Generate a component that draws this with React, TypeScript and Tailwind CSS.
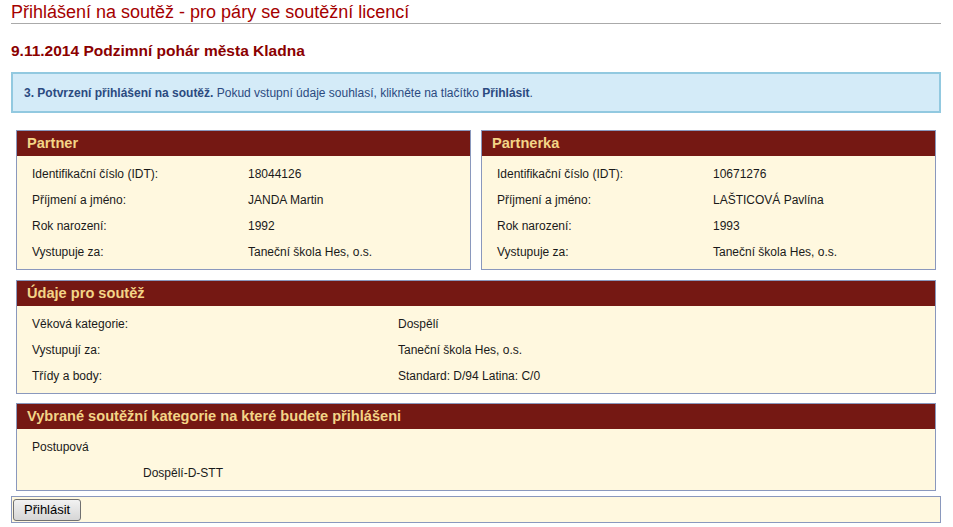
import React from "react";

const Panel = ({ title, children, className = "" }: { title: string; children: React.ReactNode; className?: string }) => (
  <div className={`border border-[#8a98bd] bg-[#fff8df] ${className}`}>
    <div className="bg-[#751813] text-[#f3d487] font-bold text-[14.6px] leading-[25px] px-[10px]">{title}</div>
    <div className="pt-[5px] pb-[4px]">{children}</div>
  </div>
);

const Row = ({ label, value, col }: { label: string; value: string; col: string }) => (
  <div className="flex h-[26px] items-center text-[12px] text-[#1a1a1a]">
    <div className={`pl-[15px] shrink-0 ${col}`}>{label}</div>
    <div>{value}</div>
  </div>
);

export default function App() {
  return (
    <div className="bg-white min-h-[527px] px-[11px] pr-[12px] font-['Liberation_Sans',Arial,sans-serif]">
      <h1 className="text-[18px] leading-[20px] pt-[2px] pb-[1px] text-[#a50000] border-b border-[#aaaaaa]">
        Přihlášení na soutěž - pro páry se soutěžní licencí
      </h1>
      <h2 className="mt-[18px] text-[15.5px] leading-[18px] font-bold text-[#8b0000]">
        9.11.2014 Podzimní pohár města Kladna
      </h2>
      <div className="mt-[12px] border-2 border-[#92c9e0] bg-[#d4ebf8] h-[41px] flex items-center px-[11px] text-[12px] text-[#2b4a80]">
        <span>
          <b>3. Potvrzení přihlášení na soutěž.</b> Pokud vstupní údaje souhlasí, klikněte na tlačítko <b>Přihlásit</b>.
        </span>
      </div>
      <div className="mx-[5px] mt-[17px] flex flex-col">
        <div className="grid grid-cols-2 gap-[10px]">
          <Panel title="Partner">
            <Row col="w-[231px]" label="Identifikační číslo (IDT):" value="18044126" />
            <Row col="w-[231px]" label="Příjmení a jméno:" value="JANDA Martin" />
            <Row col="w-[231px]" label="Rok narození:" value="1992" />
            <Row col="w-[231px]" label="Vystupuje za:" value="Taneční škola Hes, o.s." />
          </Panel>
          <Panel title="Partnerka">
            <Row col="w-[231px]" label="Identifikační číslo (IDT):" value="10671276" />
            <Row col="w-[231px]" label="Příjmení a jméno:" value="LAŠTICOVÁ Pavlína" />
            <Row col="w-[231px]" label="Rok narození:" value="1993" />
            <Row col="w-[231px]" label="Vystupuje za:" value="Taneční škola Hes, o.s." />
          </Panel>
        </div>
        <Panel title="Údaje pro soutěž" className="mt-[10px]">
          <Row col="w-[381px]" label="Věková kategorie:" value="Dospělí" />
          <Row col="w-[381px]" label="Vystupují za:" value="Taneční škola Hes, o.s." />
          <Row col="w-[381px]" label="Třídy a body:" value="Standard: D/94 Latina: C/0" />
        </Panel>
        <Panel title="Vybrané soutěžní kategorie na které budete přihlášeni" className="mt-[9px]">
          <div className="h-[26px] flex items-center pl-[15px] text-[12px] text-[#1a1a1a]">Postupová</div>
          <div className="h-[26px] flex items-center pl-[126px] text-[12px] text-[#1a1a1a]">Dospělí-D-STT</div>
        </Panel>
      </div>
      <div className="mt-[5px] border border-[#8a98bd] bg-[#fff8df] h-[27px] flex items-center px-[1px]">
        <button className="h-[22px] px-[10px] text-[13px] text-black border border-[#707070] rounded-[3px] bg-gradient-to-b from-[#f2f2f2] to-[#d6d6d6] leading-[18px]">
          Přihlásit
        </button>
      </div>
    </div>
  );
}
